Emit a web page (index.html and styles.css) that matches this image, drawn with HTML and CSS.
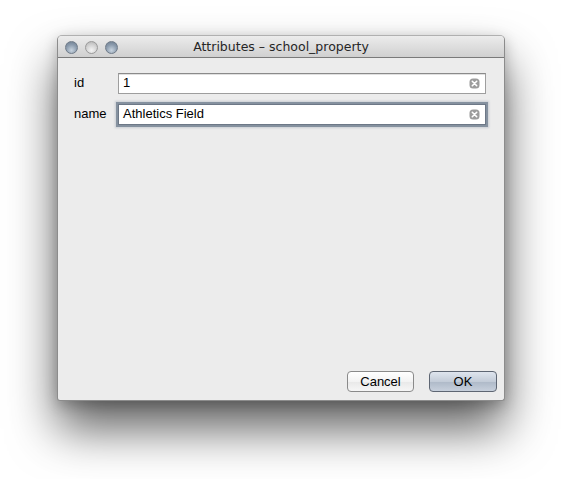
FILE: index.html
```html
<!DOCTYPE html>
<html>
<head>
<meta charset="utf-8">
<link rel="stylesheet" href="styles.css">
</head>
<body>
<div class="window">
  <div class="titlebar">
    <div class="lights">
      <span class="light blue"></span>
      <span class="light gray"></span>
      <span class="light blue"></span>
    </div>
    <div class="title">Attributes – school_property</div>
  </div>
  <div class="content">
    <div class="form">
      <div class="row">
        <label class="label">id</label>
        <div class="field">
          <span class="value">1</span>
          <svg class="clear" width="11" height="11" viewBox="0 0 11 11"><rect x="0.5" y="0.5" width="10" height="10" rx="3.5" fill="#9c9c9c"/><path d="M3.3 3.3 L7.7 7.7 M7.7 3.3 L3.3 7.7" stroke="#fff" stroke-width="1.6" stroke-linecap="round"/></svg>
        </div>
      </div>
      <div class="row">
        <label class="label">name</label>
        <div class="field focused">
          <span class="value">Athletics Field</span>
          <svg class="clear" width="11" height="11" viewBox="0 0 11 11"><rect x="0.5" y="0.5" width="10" height="10" rx="3.5" fill="#9c9c9c"/><path d="M3.3 3.3 L7.7 7.7 M7.7 3.3 L3.3 7.7" stroke="#fff" stroke-width="1.6" stroke-linecap="round"/></svg>
        </div>
      </div>
    </div>
    <div class="buttons">
      <button class="btn cancel">Cancel</button>
      <button class="btn default">OK</button>
    </div>
  </div>
</div>
</body>
</html>
```

FILE: styles.css
```css
html, body {
  margin: 0;
  padding: 0;
  background: #ffffff;
}
html {
  height: 100%;
}
body {
  min-height: 100%;
  box-sizing: border-box;
  padding: 35px 0 0 57px;
  font-family: "Liberation Sans", Arial, sans-serif;
  font-size: 13px;
  color: #000;
}
.window {
  width: 448px;
  height: 366px;
  box-sizing: border-box;
  background: #ececec;
  border: 1px solid #8c8c8c;
  border-top-color: #b0b0b0;
  border-radius: 5px 5px 3px 3px;
  box-shadow: 0 28px 48px rgba(0, 0, 0, 0.62), 0 4px 14px rgba(0,0,0,0.22);
  display: flex;
  flex-direction: column;
  overflow: hidden;
}
.titlebar {
  height: 21px;
  flex: none;
  display: flex;
  align-items: center;
  background: linear-gradient(#ececec, #d0d0d0);
  border-bottom: 1px solid #7a7a7a;
  position: relative;
}
.lights {
  display: flex;
  gap: 7px;
  padding-left: 7px;
  padding-top: 1px;
}
.light {
  width: 13px;
  height: 13px;
  border-radius: 50%;
  box-sizing: border-box;
  border: 1px solid #6f7b88;
}
.light.blue {
  background: radial-gradient(circle at 50% 75%, #c7d3de 0%, #8c9cae 55%, #6b7a8c 100%);
}
.light.gray {
  border-color: #9a9a9a;
  background: radial-gradient(circle at 50% 75%, #f4f4f4 0%, #d2d2d2 55%, #b0b0b0 100%);
}
.title {
  position: absolute;
  left: 0;
  right: 0;
  top: 3px;
  text-align: center;
  font-family: "DejaVu Sans", sans-serif;
  font-size: 12.5px;
  color: #262626;
  pointer-events: none;
}
.content {
  flex: 1;
  display: flex;
  flex-direction: column;
  justify-content: space-between;
  padding: 15px 7px 8px 16px;
}
.form {
  display: flex;
  flex-direction: column;
  gap: 10px;
  padding-right: 11px;
}
.row {
  display: flex;
  align-items: center;
  line-height: 16px;
}
.label {
  width: 44px;
  flex: none;
  margin-top: -2px;
}
.field {
  flex: 1;
  height: 21px;
  box-sizing: border-box;
  border: 1px solid #9e9e9e;
  border-top-color: #8a8a8a;
  background: #fff;
  display: flex;
  align-items: center;
  padding: 0 5px 0 4px;
  box-shadow: inset 0 1px 0 #e0e0e0;
}
.field.focused {
  border-color: #6d7887;
  box-shadow: 0 0 0 2px rgba(110, 124, 142, 0.75), 0 0 2px 3px rgba(120, 134, 152, 0.3);
}
.value {
  flex: 1;
  margin-top: -2px;
}
.clear {
  flex: none;
  display: block;
}
.buttons {
  display: flex;
  justify-content: flex-end;
  gap: 15px;
}
.btn {
  font-family: "Liberation Sans", Arial, sans-serif;
  font-size: 13px;
  height: 21px;
  box-sizing: border-box;
  padding: 0;
  border-radius: 4px;
  border: 1px solid #8a8a8a;
  background: linear-gradient(#ffffff, #f3f3f3 50%, #e8e8e8 51%, #f6f6f6);
  color: #000;
  width: 68px;
  line-height: 18px;
}
.btn.cancel {
  width: 67px;
}
.btn.default {
  border-color: #5e6673;
  background: linear-gradient(#dfe5ee, #c3ccd8 50%, #aeb9c8 51%, #c7d0dc);
}
```
